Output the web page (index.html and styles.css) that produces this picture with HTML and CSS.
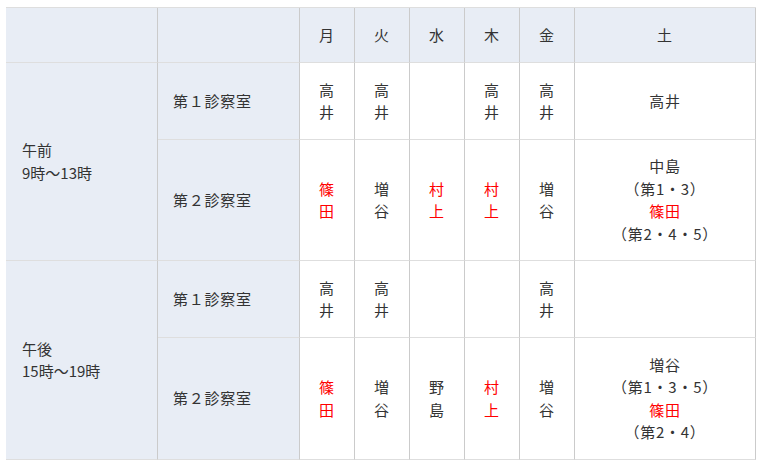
FILE: index.html
```html
<!DOCTYPE html>
<html lang="ja">
<head>
<meta charset="utf-8">
<title>診療時間</title>
<link rel="stylesheet" href="styles.css">
</head>
<body>
<div class="schedule">
  <div class="cell head"></div>
  <div class="cell head"></div>
  <div class="cell head day"><span>月</span></div>
  <div class="cell head day"><span>火</span></div>
  <div class="cell head day"><span>水</span></div>
  <div class="cell head day"><span>木</span></div>
  <div class="cell head day"><span>金</span></div>
  <div class="cell head day"><span>土</span></div>

  <div class="cell head period span2"><span>午前<br>9時～13時</span></div>
  <div class="cell head room"><span>第１診察室</span></div>
  <div class="cell doc"><span>高<br>井</span></div>
  <div class="cell doc"><span>高<br>井</span></div>
  <div class="cell doc"></div>
  <div class="cell doc"><span>高<br>井</span></div>
  <div class="cell doc"><span>高<br>井</span></div>
  <div class="cell doc"><span>高井</span></div>

  <div class="cell head room"><span>第２診察室</span></div>
  <div class="cell doc red"><span>篠<br>田</span></div>
  <div class="cell doc"><span>増<br>谷</span></div>
  <div class="cell doc red"><span>村<br>上</span></div>
  <div class="cell doc red"><span>村<br>上</span></div>
  <div class="cell doc"><span>増<br>谷</span></div>
  <div class="cell doc"><span>中島<br>（第1・3）<br><em class="red">篠田</em><br>（第2・4・5）</span></div>

  <div class="cell head period span2"><span>午後<br>15時～19時</span></div>
  <div class="cell head room"><span>第１診察室</span></div>
  <div class="cell doc"><span>高<br>井</span></div>
  <div class="cell doc"><span>高<br>井</span></div>
  <div class="cell doc"></div>
  <div class="cell doc"></div>
  <div class="cell doc"><span>高<br>井</span></div>
  <div class="cell doc"></div>

  <div class="cell head room"><span>第２診察室</span></div>
  <div class="cell doc red"><span>篠<br>田</span></div>
  <div class="cell doc"><span>増<br>谷</span></div>
  <div class="cell doc"><span>野<br>島</span></div>
  <div class="cell doc red"><span>村<br>上</span></div>
  <div class="cell doc"><span>増<br>谷</span></div>
  <div class="cell doc"><span>増谷<br>（第1・3・5）<br><em class="red">篠田</em><br>（第2・4）</span></div>
</div>
</body>
</html>
```

FILE: styles.css
```css
html, body {
  margin: 0;
  padding: 0;
  background: #ffffff;
}

body {
  font-family: "Noto Sans CJK JP", "Noto Sans", sans-serif;
  font-size: 15px;
  line-height: 22.5px;
  color: #333333;
}

.schedule {
  display: grid;
  grid-template-columns: 152px 142px repeat(5, 55px) 181px;
  grid-template-rows: 55px 77px 121px 77px 122px;
  width: 750px;
  margin: 7px 0 0 6px;
  border-top: 1px solid #dedede;
}

.cell {
  box-sizing: border-box;
  display: flex;
  align-items: center;
  border-right: 1px solid #cbcbcb;
  border-bottom: 1px solid #dedede;
  background: #ffffff;
  letter-spacing: 0.05em;
}

.cell em {
  font-style: normal;
}

.head {
  background: #e8edf5;
}

.day,
.doc {
  justify-content: center;
  text-align: center;
}

.period {
  padding-left: 16px;
  letter-spacing: 0;
}

.room {
  padding-left: 15px;
}

.span2 {
  grid-row: span 2;
}

.red {
  color: #ff0000;
}
```
